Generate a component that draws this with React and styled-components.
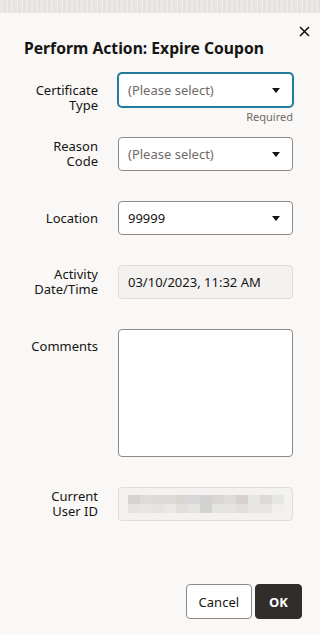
import React from 'react'
import styled, { createGlobalStyle } from 'styled-components'

const GlobalStyle = createGlobalStyle`
  html, body {
    margin: 0;
    padding: 0;
    background: #f9f8f6;
  }
  body {
    font-family: 'Noto Sans', 'Open Sans', sans-serif;
    color: #161513;
  }
`

const userIdCells = [
  ['#d6d4d2', '#e6e4e2'],
  ['#dedcda', '#e8e6e4'],
  ['#dcd9d7', '#e5e3e1'],
  ['#dcd9d7', '#eae8e6'],
  ['#d9d5d2', '#e2dfdc'],
  ['#d8d6d8', '#e6e4e2'],
  ['#d2d2d0', '#d3d3d1'],
  ['#dbd6d6', '#e6e4e2'],
  ['#dedcda', '#e6e4e2'],
  ['#d7d1d1', '#e2dfdd'],
  ['#e6e6e4', '#e8e6e4'],
  ['#dcd9d7', '#e8e6e4'],
  ['#e5e5e3', '#f0efed'],
]

export default function App() {
  return (
    <>
      <GlobalStyle />
      <Backdrop />
      <Dialog>
        <Header>
          <Title>Perform Action: Expire Coupon</Title>
          <CloseButton aria-label='Close'>
            <svg width='11' height='11' viewBox='0 0 11 11'>
              <path d='M1 1 L10 10 M10 1 L1 10' stroke='#161513' strokeWidth='1.6' />
            </svg>
          </CloseButton>
        </Header>

        <Form>
          <Row $tight>
            <Label>Certificate<br />Type</Label>
            <Control>
              <Select $focused>
                <Placeholder>(Please select)</Placeholder>
                <Caret />
              </Select>
              <Help>Required</Help>
            </Control>
          </Row>

          <Row>
            <Label>Reason<br />Code</Label>
            <Control>
              <Select>
                <Placeholder>(Please select)</Placeholder>
                <Caret />
              </Select>
            </Control>
          </Row>

          <Row>
            <Label>Location</Label>
            <Control>
              <Select>
                <Value>99999</Value>
                <Caret />
              </Select>
            </Control>
          </Row>

          <Row>
            <Label>Activity<br />Date/Time</Label>
            <Control>
              <ReadOnly>
                <Value>03/10/2023, 11:32 AM</Value>
              </ReadOnly>
            </Control>
          </Row>

          <Row $top>
            <Label $top>Comments</Label>
            <Control>
              <TextArea />
            </Control>
          </Row>

          <Row>
            <Label>Current<br />User ID</Label>
            <Control>
              <ReadOnly>
                <Blurred>
                  {userIdCells.map(([a, b], i) => (
                    <BlurCell key={i}>
                      <span style={{ background: a }} />
                      <span style={{ background: b }} />
                    </BlurCell>
                  ))}
                </Blurred>
              </ReadOnly>
            </Control>
          </Row>
        </Form>

        <Footer>
          <Button>Cancel</Button>
          <Button $primary>OK</Button>
        </Footer>
      </Dialog>
    </>
  )
}

const Backdrop = styled.div`
  height: 13px;
  background: repeating-linear-gradient(
      90deg,
      #e9e7e4 0 2px,
      #efedea 2px 3px,
      #e4e2df 3px 5px
    ),
    #ebe9e6;
`

const Dialog = styled.div`
  display: flex;
  flex-direction: column;
  height: 622px;
  box-sizing: border-box;
  padding: 0 24px 16px 24px;
`

const Header = styled.div`
  display: flex;
  justify-content: space-between;
  align-items: flex-start;
  padding-top: 13px;
`

const Title = styled.h1`
  margin: 11px 0 0 0;
  font-size: 15.7px;
  font-weight: 700;
  line-height: 22px;
  white-space: nowrap;
`

const CloseButton = styled.button`
  border: 0;
  background: none;
  padding: 0;
  margin-right: -14px;
  width: 11px;
  height: 11px;
  display: flex;
  cursor: pointer;
`

const Form = styled.div`
  display: flex;
  flex-direction: column;
  margin-top: 14px;
`

const Row = styled.div`
  display: grid;
  grid-template-columns: 74px 175px;
  column-gap: 20px;
  align-items: ${p => (p.$top ? 'start' : 'center')};
  margin-bottom: ${p => (p.$tight ? '14px' : '30px')};
`

const Label = styled.div`
  font-size: 13px;
  line-height: 15px;
  text-align: right;
  color: #161513;
  padding-top: ${p => (p.$top ? '10px' : '0')};
`

const Control = styled.div`
  display: flex;
  flex-direction: column;
`

const Select = styled.div`
  height: 34px;
  box-sizing: border-box;
  display: flex;
  align-items: center;
  justify-content: space-between;
  padding: 0 12px 0 9px;
  background: #fff;
  border-radius: 4px;
  border: 1px solid ${p => (p.$focused ? '#227b98' : '#8f8a86')};
  box-shadow: ${p => (p.$focused ? '0 0 0 1px #227b98' : 'none')};
`

const Placeholder = styled.span`
  font-size: 13px;
  color: #6f6b67;
`

const Value = styled.span`
  font-size: 13px;
  color: #161513;
`

const Caret = styled.span`
  width: 0;
  height: 0;
  border-left: 4px solid transparent;
  border-right: 4px solid transparent;
  border-top: 5px solid #161513;
`

const Help = styled.div`
  margin-top: 3px;
  text-align: right;
  font-size: 11px;
  line-height: 13px;
  color: #6f6b67;
`

const ReadOnly = styled.div`
  height: 34px;
  box-sizing: border-box;
  display: flex;
  align-items: center;
  padding: 0 9px;
  background: #f4f2f0;
  border: 1px solid #e0dddb;
  border-radius: 4px;
`

const TextArea = styled.div`
  height: 128px;
  box-sizing: border-box;
  background: #fff;
  border: 1px solid #8f8a86;
  border-radius: 4px;
`

const Blurred = styled.div`
  display: flex;
`

const BlurCell = styled.div`
  display: flex;
  flex-direction: column;
  width: 12px;
  span {
    display: block;
    height: 9px;
  }
`

const Footer = styled.div`
  margin-top: auto;
  display: flex;
  justify-content: flex-end;
  gap: 3px;
  margin-right: -6px;
`

const Button = styled.button`
  height: 35px;
  box-sizing: border-box;
  padding: 0 ${p => (p.$primary ? '13px' : '12px')};
  min-width: ${p => (p.$primary ? '44px' : '66px')};
  font-family: 'Noto Sans', 'Open Sans', sans-serif;
  font-size: 13px;
  font-weight: ${p => (p.$primary ? 700 : 400)};
  border-radius: 4px;
  cursor: pointer;
  color: ${p => (p.$primary ? '#fff' : '#161513')};
  background: ${p => (p.$primary ? '#312d2a' : '#fff')};
  border: 1px solid ${p => (p.$primary ? '#312d2a' : '#8f8a86')};
`
